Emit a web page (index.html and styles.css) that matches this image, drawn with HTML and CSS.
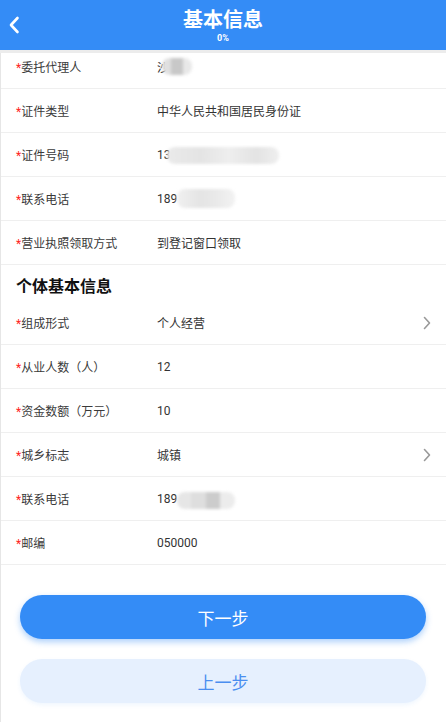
FILE: index.html
```html
<!DOCTYPE html>
<html lang="zh">
<head>
<meta charset="utf-8">
<link rel="stylesheet" href="styles.css">
</head>
<body>
<div class="page">
  <header class="header">
    <div class="back">
      <svg width="12" height="18" viewBox="0 0 12 18"><path d="M9.5 2 L3 9 L9.5 16" fill="none" stroke="#fff" stroke-width="2.6" stroke-linecap="round" stroke-linejoin="round"/></svg>
    </div>
    <div class="title">基本信息</div>
    <div class="progress">0%</div>
  </header>
  <div class="divider"></div>
  <main class="content">
    <div class="row first">
      <div class="label"><span class="star">*</span>委托代理人</div>
      <div class="value"><span class="masked">沙<span class="blur b1"></span></span></div>
    </div>
    <div class="row">
      <div class="label"><span class="star">*</span>证件类型</div>
      <div class="value">中华人民共和国居民身份证</div>
    </div>
    <div class="row">
      <div class="label"><span class="star">*</span>证件号码</div>
      <div class="value"><span class="masked">13<span class="blur b2"></span></span></div>
    </div>
    <div class="row">
      <div class="label"><span class="star">*</span>联系电话</div>
      <div class="value"><span class="masked">189<span class="blur b3"></span></span></div>
    </div>
    <div class="row">
      <div class="label"><span class="star">*</span>营业执照领取方式</div>
      <div class="value">到登记窗口领取</div>
    </div>
    <div class="section">个体基本信息</div>
    <div class="row">
      <div class="label"><span class="star">*</span>组成形式</div>
      <div class="value">个人经营</div>
      <svg class="arrow" width="10" height="14" viewBox="0 0 10 14"><path d="M2.5 1.5 L7.5 7 L2.5 12.5" fill="none" stroke="#999" stroke-width="1.6" stroke-linecap="round" stroke-linejoin="round"/></svg>
    </div>
    <div class="row">
      <div class="label"><span class="star">*</span>从业人数（人）</div>
      <div class="value">12</div>
    </div>
    <div class="row">
      <div class="label"><span class="star">*</span>资金数额（万元）</div>
      <div class="value">10</div>
    </div>
    <div class="row">
      <div class="label"><span class="star">*</span>城乡标志</div>
      <div class="value">城镇</div>
      <svg class="arrow" width="10" height="14" viewBox="0 0 10 14"><path d="M2.5 1.5 L7.5 7 L2.5 12.5" fill="none" stroke="#999" stroke-width="1.6" stroke-linecap="round" stroke-linejoin="round"/></svg>
    </div>
    <div class="row">
      <div class="label"><span class="star">*</span>联系电话</div>
      <div class="value"><span class="masked">189<span class="blur b4"></span></span></div>
    </div>
    <div class="row">
      <div class="label"><span class="star">*</span>邮编</div>
      <div class="value">050000</div>
    </div>
    <div class="buttons">
      <button class="btn primary">下一步</button>
      <button class="btn secondary">上一步</button>
    </div>
  </main>
</div>
</body>
</html>
```

FILE: styles.css
```css
* { box-sizing: border-box; margin: 0; padding: 0; }
html, body { width: 446px; height: 722px; overflow: hidden; background: #fff; }
body { font-family: "Roboto", "Noto Sans CJK SC", sans-serif; color: #333; }
.page { display: flex; flex-direction: column; height: 722px; }
.header {
  position: relative;
  height: 50px;
  background: #348cf6;
  display: flex;
  flex-direction: column;
  align-items: center;
  padding-top: 8px;
  color: #fff;
}
.back { position: absolute; left: 8px; top: 16px; }
.title { font-size: 20px; font-weight: 700; line-height: 24px; letter-spacing: 0; }
.progress { font-size: 9px; font-weight: 700; line-height: 11px; margin-top: 1px; }
.divider { height: 3px; background: #ececec; }
.content { flex: 1; border-left: 1px solid #e6e6e6; display: flex; flex-direction: column; }
.row {
  height: 44px;
  display: flex;
  align-items: center;
  border-bottom: 1px solid #efefef;
  padding-left: 15px;
  padding-right: 14px;
  font-size: 12px;
}
.row.first { height: 36px; align-items: flex-start; padding-top: 5px; }
.label { width: 141px; flex: none; color: #3a3a3a; }
.star { color: #f22; font-size: 12px; }
.value { flex: 1; color: #333; }
.arrow { flex: none; }
.masked { position: relative; display: inline-block; }
.blur { position: absolute; top: 0; height: 17px; border-radius: 8px; filter: blur(1.5px); }
.b1 { left: 5px; width: 30px; top: 0; background: linear-gradient(90deg, #e0e0e0 0 30%, #c8c8c8 30% 70%, #e8e8e8 70%); }
.b2 { left: 10px; width: 112px; top: -1px; background: linear-gradient(90deg, #eaeaea, #e4e4e4 30%, #eeeeee 55%, #e3e3e3 80%, #efefef); }
.b3 { left: 20px; width: 58px; top: -3px; height: 19px; background: linear-gradient(90deg, #f0f0f0, #e4e4e4 40%, #eaeaea 70%, #f2f2f2); }
.b4 { left: 20px; width: 58px; background: linear-gradient(90deg, #e6e6e6 0 25%, #dedede 25% 50%, #cccccc 50% 75%, #ececec 75%); }
.section {
  height: 36px;
  display: flex;
  align-items: center;
  padding-left: 15px;
  font-size: 16px;
  font-weight: 700;
  color: #111;
  padding-top: 3px;
}
.buttons { display: flex; flex-direction: column; gap: 20px; padding: 30px 20px 0 19px; }
.btn {
  height: 44px;
  border: none;
  border-radius: 22px;
  font-family: "Noto Sans CJK SC", sans-serif;
  font-size: 17px;
}
.primary { background: #348cf6; color: #fff; box-shadow: 0 3px 6px rgba(52,140,246,0.4); }
.secondary { background: #e6f0fe; color: #4a8ef0; box-shadow: 0 2px 4px rgba(52,140,246,0.08); }
```
